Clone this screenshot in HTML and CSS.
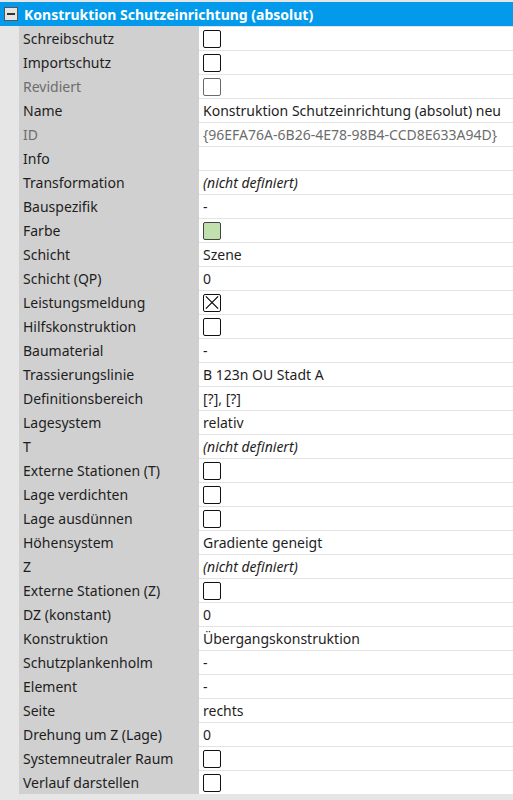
FILE: index.html
```html
<!DOCTYPE html>
<html lang="de">
<head>
<meta charset="utf-8">
<title>Eigenschaften</title>
<link rel="stylesheet" href="styles.css">
</head>
<body>
<div class="grid">
  <div class="topstrip"></div>
  <div class="header">
    <span class="toggle"><span class="minus"></span></span>
    <span class="title">Konstruktion Schutzeinrichtung (absolut)</span>
  </div>
  <div class="rows">
    <div class="row"><div class="label">Schreibschutz</div><div class="value"><span class="cb"></span></div></div>
    <div class="row"><div class="label">Importschutz</div><div class="value"><span class="cb"></span></div></div>
    <div class="row"><div class="label dim">Revidiert</div><div class="value"><span class="cb cb-dim"></span></div></div>
    <div class="row"><div class="label">Name</div><div class="value">Konstruktion Schutzeinrichtung (absolut) neu</div></div>
    <div class="row"><div class="label dim">ID</div><div class="value dim">{96EFA76A-6B26-4E78-98B4-CCD8E633A94D}</div></div>
    <div class="row"><div class="label">Info</div><div class="value"></div></div>
    <div class="row"><div class="label">Transformation</div><div class="value it">(nicht definiert)</div></div>
    <div class="row"><div class="label">Bauspezifik</div><div class="value">-</div></div>
    <div class="row"><div class="label">Farbe</div><div class="value"><span class="swatch"></span></div></div>
    <div class="row"><div class="label">Schicht</div><div class="value">Szene</div></div>
    <div class="row"><div class="label">Schicht (QP)</div><div class="value">0</div></div>
    <div class="row"><div class="label">Leistungsmeldung</div><div class="value"><span class="cb"><svg viewBox="0 0 17 17" width="17" height="17"><path d="M2 2L15 15M15 2L2 15" stroke="#000" stroke-width="1.2" fill="none"/></svg></span></div></div>
    <div class="row"><div class="label">Hilfskonstruktion</div><div class="value"><span class="cb"></span></div></div>
    <div class="row"><div class="label">Baumaterial</div><div class="value">-</div></div>
    <div class="row"><div class="label">Trassierungslinie</div><div class="value">B 123n OU Stadt A</div></div>
    <div class="row"><div class="label">Definitionsbereich</div><div class="value">[?], [?]</div></div>
    <div class="row"><div class="label">Lagesystem</div><div class="value">relativ</div></div>
    <div class="row"><div class="label">T</div><div class="value it">(nicht definiert)</div></div>
    <div class="row"><div class="label">Externe Stationen (T)</div><div class="value"><span class="cb"></span></div></div>
    <div class="row"><div class="label">Lage verdichten</div><div class="value"><span class="cb"></span></div></div>
    <div class="row"><div class="label">Lage ausdünnen</div><div class="value"><span class="cb"></span></div></div>
    <div class="row"><div class="label">Höhensystem</div><div class="value">Gradiente geneigt</div></div>
    <div class="row"><div class="label">Z</div><div class="value it">(nicht definiert)</div></div>
    <div class="row"><div class="label">Externe Stationen (Z)</div><div class="value"><span class="cb"></span></div></div>
    <div class="row"><div class="label">DZ (konstant)</div><div class="value">0</div></div>
    <div class="row"><div class="label">Konstruktion</div><div class="value">Übergangskonstruktion</div></div>
    <div class="row"><div class="label">Schutzplankenholm</div><div class="value">-</div></div>
    <div class="row"><div class="label">Element</div><div class="value">-</div></div>
    <div class="row"><div class="label">Seite</div><div class="value">rechts</div></div>
    <div class="row"><div class="label">Drehung um Z (Lage)</div><div class="value">0</div></div>
    <div class="row"><div class="label">Systemneutraler Raum</div><div class="value"><span class="cb"></span></div></div>
    <div class="row"><div class="label">Verlauf darstellen</div><div class="value"><span class="cb"></span></div></div>
  </div>
  <div class="bottomstrip"></div>
</div>
</body>
</html>
```

FILE: styles.css
```css
* { box-sizing: border-box; }
html, body { margin: 0; padding: 0; }
body {
  width: 513px;
  height: 800px;
  overflow: hidden;
  background: #e6e6e6;
  font-family: "Noto Sans", "Open Sans", sans-serif;
  font-size: 14px;
  color: #1e1e1e;
}
.grid { display: flex; flex-direction: column; }
.topstrip { height: 2px; background: #e6e6e6; }
.header {
  height: 24px;
  background: #039aeb;
  display: flex;
  align-items: center;
  color: #fff;
  font-weight: 700;
}
.toggle {
  width: 14px;
  height: 14px;
  margin-left: 4px;
  margin-right: 6px;
  background: #e4e4e4;
  border: 1px solid #555;
  display: flex;
  align-items: center;
  justify-content: center;
}
.minus { width: 8px; height: 2px; background: #333; }
.title { white-space: nowrap; }
.rows {
  display: flex;
  flex-direction: column;
  padding-left: 19px;
  background: #e6e6e6;
}
.row {
  display: flex;
  height: 24px;
}
.label {
  width: 180px;
  background: #d0d0d0;
  padding-left: 4px;
  display: flex;
  align-items: center;
  white-space: nowrap;
}
.value {
  flex: 1;
  background: #fff;
  border-top: 1px solid #e3e3e3;
  padding-left: 4px;
  display: flex;
  align-items: center;
  white-space: nowrap;
  overflow: hidden;
}
.dim { color: #6d6d6d; }
.it { font-style: italic; }
.cb {
  width: 18px;
  height: 18px;
  border: 1px solid #111;
  border-radius: 2px;
  background: #fff;
  display: flex;
  align-items: center;
  justify-content: center;
}
.cb svg { display: block; }
.cb-dim { border-color: #6a6a6a; }
.swatch {
  width: 18px;
  height: 18px;
  border: 1px solid #444;
  border-radius: 2px;
  background: #c0e0ae;
}
.bottomstrip { height: 6px; background: #e6e6e6; }
```
